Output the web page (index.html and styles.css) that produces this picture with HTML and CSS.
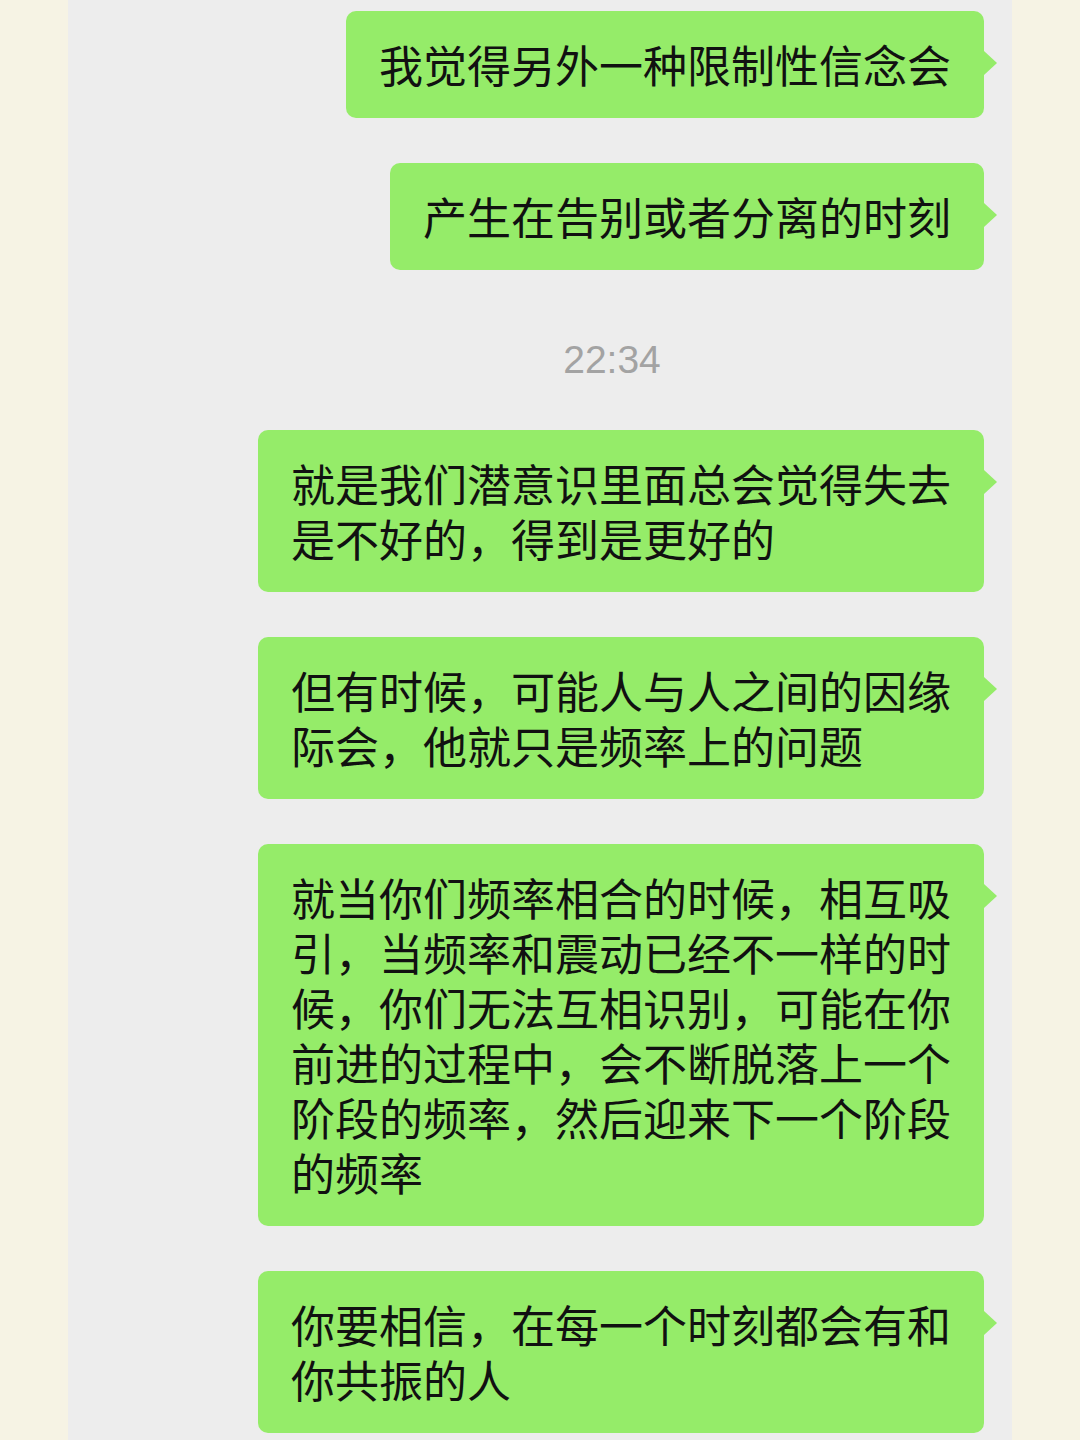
FILE: index.html
```
<!DOCTYPE html>
<html lang="zh-CN">

<head>
    <meta charset="UTF-8">
    <meta name="viewport" content="width=device-width, initial-scale=1.0">
    <title>聊天记录</title>
    <link rel="stylesheet" href="styles.css">
</head>

<body>
    <div class="chat">
        <div class="bubble">我觉得另外一种限制性信念会</div>
        <div class="bubble">产生在告别或者分离的时刻</div>

        <div class="time">22:34</div>

        <div class="bubble">就是我们潜意识里面总会觉得失去是不好的，得到是更好的</div>
        <div class="bubble">但有时候，可能人与人之间的因缘际会，他就只是频率上的问题</div>
        <div class="bubble">就当你们频率相合的时候，相互吸引，当频率和震动已经不一样的时候，你们无法互相识别，可能在你前进的过程中，会不断脱落上一个阶段的频率，然后迎来下一个阶段的频率</div>
        <div class="bubble">你要相信，在每一个时刻都会有和你共振的人</div>
    </div>
</body>

</html>
```

FILE: styles.css
```
body {
    margin: 0;
    background-color: #f6f3e4;
    font-family: "Noto Sans CJK SC", "Noto Sans", sans-serif;
}

.chat {
    width: 944px;
    min-height: 1440px;
    margin-left: 68px;
    padding: 11px 28px 0 0;
    box-sizing: border-box;
    background-color: #ededed;
    display: flex;
    flex-direction: column;
    align-items: flex-end;
    gap: 45px;
}

.bubble {
    position: relative;
    max-width: 660px;
    padding: 26px 33px;
    background-color: #95ec69;
    border-radius: 10px;
    color: #111;
    font-size: 44px;
    line-height: 55px;
}

/* little arrow on the right side of each bubble */
.bubble::after {
    content: "";
    position: absolute;
    top: 40px;
    right: -13px;
    border-top: 12px solid transparent;
    border-bottom: 12px solid transparent;
    border-left: 13px solid #95ec69;
}

.time {
    align-self: stretch;
    padding-left: 172px;
    margin: 25px 0 5px;
    text-align: center;
    color: #a3a3a3;
    font-family: "Liberation Sans", Arial, sans-serif;
    font-size: 39px;
    line-height: 40px;
}
```
